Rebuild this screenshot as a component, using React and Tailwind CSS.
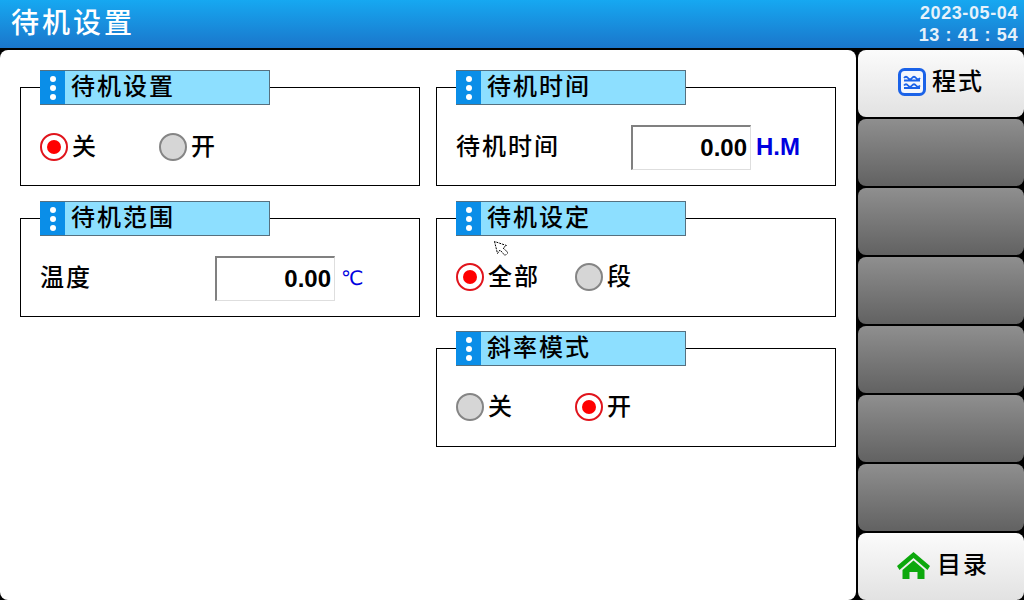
const font = { fontFamily: '"Liberation Sans", "Noto Sans CJK SC", sans-serif' };

function Radio({ on, label, width }) {
    return (
        <div className={`flex items-center ${width}`}>
            <div className={`flex h-[28px] w-[28px] items-center justify-center rounded-full border-2 ${on ? 'border-[#e0141c] bg-white' : 'border-[#858585] bg-[#d6d6d6]'}`}>
                {on && <div className="h-[14px] w-[14px] rounded-full bg-[#ff0000]"></div>}
            </div>
            <span className="ml-[4px] text-[24px] font-medium leading-[28px] tracking-[2px] text-black">{label}</span>
        </div>
    );
}

function Group({ title, children, className = '', bodyClass = 'pt-[19px]' }) {
    return (
        <div className={`flex flex-col ${className}`}>
            <div className="z-10 ml-[20px] flex h-[35px] w-[230px] border border-[#56707f] bg-[#8ddfff]">
                <div className="-ml-[1px] flex w-[25px] flex-col items-center justify-center gap-[3px] bg-[#0a8ee8]">
                    <div className="h-[6px] w-[6px] rounded-full bg-white"></div>
                    <div className="h-[6px] w-[6px] rounded-full bg-white"></div>
                    <div className="h-[6px] w-[6px] rounded-full bg-white"></div>
                </div>
                <span className="ml-[6px] text-[24px] font-medium leading-[32px] tracking-[2px] text-black">{title}</span>
            </div>
            <div className={`mt-[-18px] flex h-[99px] items-center border border-black bg-white pl-[19px] ${bodyClass}`}>
                {children}
            </div>
        </div>
    );
}

function Field({ value, unit, unitClass }) {
    return (
        <div className="flex items-center">
            <div className="flex h-[45px] w-[120px] items-center justify-end border-2 border-b border-r border-[#808080] border-r-[#dedede] border-b-[#dedede] pr-[3px] text-[24px] font-bold text-black">
                {value}
            </div>
            <span className={`text-[#0000e0] ${unitClass}`}>{unit}</span>
        </div>
    );
}

function SideButton({ children, active, className = '' }) {
    if (!active) {
        return <div className="h-[67px] rounded-[8px] bg-gradient-to-b from-[#8f8f8f] to-[#626262]"></div>;
    }
    return (
        <div className={`flex h-[67px] items-center justify-center rounded-[8px] bg-gradient-to-b from-[#fbfbfb] to-[#e2e2e2] text-[24px] font-medium tracking-[2px] text-black ${className}`}>
            {children}
        </div>
    );
}

export default function App() {
    return (
        <div className="flex h-[600px] w-[1024px] flex-col overflow-hidden bg-black" style={font}>
            <header className="flex h-[48px] items-center justify-between bg-gradient-to-b from-[#16a8f1] to-[#1a76cb] pl-[11px] pr-[6px]">
                <div className="text-[28px] font-medium tracking-[3px] text-white">待机设置</div>
                <div className="text-right text-[18px] font-bold leading-[22px] tracking-[0.6px] text-[#e6f2fb]">
                    <div>2023-05-04</div>
                    <div>13 : 41 : 54</div>
                </div>
            </header>
            <div className="mt-[2px] flex flex-1">
                <main className="relative w-[856px] rounded-[8px] bg-white px-[20px] pt-[20px]">
                    <div className="grid grid-cols-[400px_400px] gap-x-[16px]">
                        <div className="flex flex-col gap-[15px]">
                            <Group title="待机设置" bodyClass="pt-[21px]">
                                <Radio on label="关" width="w-[119px]" />
                                <Radio label="开" />
                            </Group>
                            <Group title="待机范围" bodyClass="pt-[21px]">
                                <span className="w-[175px] text-[24px] font-medium tracking-[2px] text-black">温度</span>
                                <Field value="0.00" unit="℃" unitClass="ml-[6px] font-['DejaVu_Sans'] text-[20px]" />
                            </Group>
                        </div>
                        <div className="flex flex-col gap-[15px]">
                            <Group title="待机时间" bodyClass="pt-[21px]">
                                <span className="w-[175px] text-[24px] font-medium tracking-[2px] text-black">待机时间</span>
                                <Field value="0.00" unit="H.M" unitClass="ml-[5px] text-[24px] font-bold" />
                            </Group>
                            <Group title="待机设定">
                                <Radio on label="全部" width="w-[119px]" />
                                <Radio label="段" />
                            </Group>
                            <Group title="斜率模式" className="-mt-[1px]">
                                <Radio label="关" width="w-[119px]" />
                                <Radio on label="开" />
                            </Group>
                        </div>
                    </div>
                    {/* mouse pointer left on the screen */}
                    <svg className="absolute left-[493px] top-[190px]" width="18" height="18" viewBox="0 0 18 18">
                        <path d="M1.500 1.500 L4.500 13.500 L7 10 L12 15.500 L15 12.500 L10 8 L13.500 5.500 Z" fill="white" stroke="black" strokeWidth="1" strokeDasharray="2 1" />
                    </svg>
                </main>
                <aside className="ml-[2px] flex w-[166px] flex-col gap-[2px]">
                    <SideButton active>
                        <svg width="28" height="28" viewBox="0 0 28 28" className="mb-[3px] mr-[6px]" fill="none">
                            <rect x="1.500" y="1.500" width="25" height="25" rx="5" stroke="#1a62e8" strokeWidth="3" fill="#f4f7fd" />
                            <path d="M6 10 q2 -2.500 4 0 t4 0 t4 0 t4 0 M6 12.500 h16 M6 17.500 q2 -2.500 4 0 t4 0 t4 0 t4 0 M6 20 h16" stroke="#1a62e8" strokeWidth="1.800" />
                        </svg>
                        <span className="mb-[4px]">程式</span>
                    </SideButton>
                    <SideButton />
                    <SideButton />
                    <SideButton />
                    <SideButton />
                    <SideButton />
                    <SideButton />
                    <SideButton active className="pl-[4px]">
                        <svg width="33" height="28" viewBox="0 0 33 28" className="mb-[2px] mr-[7px]">
                            <path d="M16.500 0 L33 14 L30.500 18 L16.500 6 L2.500 18 L0 14 Z" fill="#0ca80c" />
                            <path d="M16.500 8.500 L27.500 18 V27 H20.500 V20 H12.500 V27 H5.500 V18 Z" fill="#0ca80c" />
                        </svg>
                        <span className="mb-[4px]">目录</span>
                    </SideButton>
                </aside>
            </div>
        </div>
    );
}
